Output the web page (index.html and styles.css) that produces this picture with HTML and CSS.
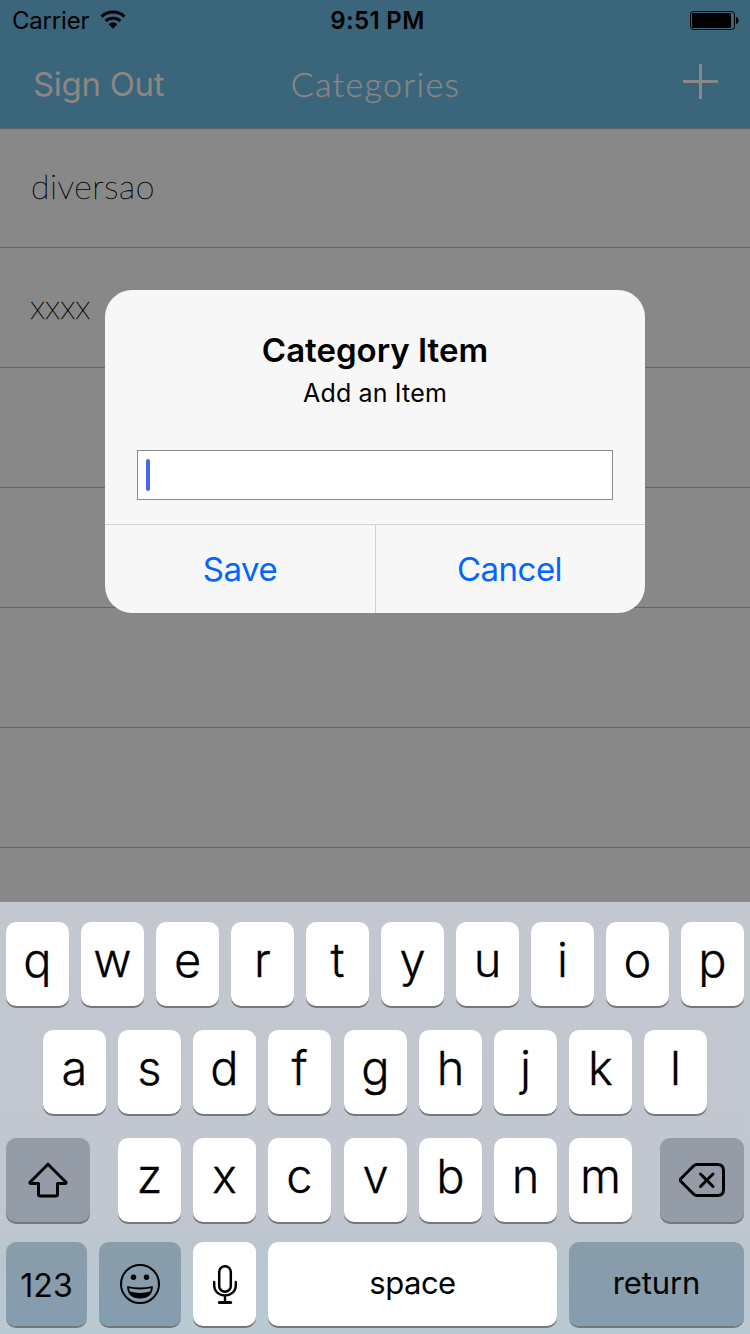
FILE: index.html
```
<!DOCTYPE html>
<html lang="en">
<head>
<meta charset="utf-8">
<title>Categories</title>
<link rel="stylesheet" href="styles.css">
</head>
<body>
<div class="screen">
  <header class="header">
    <div class="status">
      <div class="status-left">
        <span class="carrier">Carrier</span>
        <svg class="wifi" width="26" height="20" viewBox="0 0 26 20">
          <path d="M1.600 6.600C8 .6 18 .6 24.400 6.600" fill="none" stroke="#000" stroke-width="3"/>
          <path d="M5.600 11C9.800 7.100 16.200 7.100 20.400 11" fill="none" stroke="#000" stroke-width="2.800"/>
          <path d="M8.600 14.200C11 11.900 15 11.900 17.400 14.200L13 18.800Z"/>
        </svg>
      </div>
      <span class="time">9:51 PM</span>
      <svg class="battery" width="49" height="19" viewBox="0 0 49 19">
        <rect x=".5" y=".5" width="44" height="18" rx="3" fill="none" stroke="#000"/>
        <rect x="2" y="2" width="39" height="15" rx="1.500"/>
        <path d="M46 6c3.400.8 3.400 6.200 0 7z"/>
      </svg>
    </div>
    <nav class="nav">
      <span class="sign-out">Sign Out</span>
      <span class="nav-title">Categories</span>
      <svg class="plus" width="36" height="36" viewBox="0 0 36 36"><path d="M0 17.500H35M17.500 0V35" stroke="#8c8684" stroke-width="3"/></svg>
    </nav>
  </header>
  <ul class="list">
    <li class="row first"><span>diversao</span></li>
    <li class="row second"><span>xxxx</span></li>
    <li class="row"></li>
    <li class="row"></li>
    <li class="row"></li>
    <li class="row"></li>
  </ul>

  <div class="alert">
    <div class="alert-body">
      <div class="alert-title">Category Item</div>
      <div class="alert-message">Add an Item</div>
      <div class="field"><span class="caret"></span></div>
    </div>
    <div class="actions">
      <div class="action save"><span>Save</span></div>
      <div class="action cancel"><span>Cancel</span></div>
    </div>
  </div>

  <div class="keyboard">
    <div class="keys">
      <div class="key">q</div><div class="key">w</div><div class="key">e</div><div class="key">r</div><div class="key">t</div><div class="key">y</div><div class="key">u</div><div class="key">i</div><div class="key">o</div><div class="key">p</div>
    </div>
    <div class="keys middle">
      <div class="key">a</div><div class="key">s</div><div class="key">d</div><div class="key">f</div><div class="key nudge">g</div><div class="key">h</div><div class="key">j</div><div class="key">k</div><div class="key">l</div>
    </div>
    <div class="keys">
      <div class="key dark shift">
        <svg width="40" height="36" viewBox="0 0 40 36" fill="none" stroke="#000" stroke-width="3" stroke-linejoin="round"><path d="M20 2.200L38 20.200Q38.500 21.500 37 21.500H29.500V32Q29.500 34 27.500 34H12.500Q10.500 34 10.500 32V21.500H3Q1.500 21.500 2 20.200Z"/></svg>
      </div>
      <div class="key">z</div><div class="key">x</div><div class="key">c</div><div class="key nudge">v</div><div class="key">b</div><div class="key">n</div><div class="key">m</div>
      <div class="key dark delete">
        <svg width="46" height="34" viewBox="0 0 46 34" fill="none" stroke="#000" stroke-width="3" stroke-linejoin="round" stroke-linecap="round"><path d="M18 1.500H38.500Q44.500 1.500 44.500 7.500V26.500Q44.500 32.500 38.500 32.500H18Q16 32.500 14.500 31L2 18.500Q.8 17 2 15.500L14.500 3Q16 1.500 18 1.500Z"/><path d="M21.500 11L34 23.500M34 11L21.500 23.500"/></svg>
      </div>
    </div>
    <div class="keys bottom">
      <div class="key blue numbers">123</div>
      <div class="key blue emoji">
        <svg width="40" height="40" viewBox="0 0 40 40"><circle cx="20" cy="20" r="19" fill="none" stroke="#000" stroke-width="2"/><circle cx="13.500" cy="13.300" r="2.700"/><circle cx="26.500" cy="13.300" r="2.700"/><path d="M8 23Q20 26 32 23Q31.500 33.500 20 33.500T8 23Z" fill="none" stroke="#000" stroke-width="1.800" stroke-linejoin="round"/><path d="M9 27.300Q20 30.500 31 27.300Q28.500 33.500 20 33.500T9 27.300Z"/></svg>
      </div>
      <div class="key mic">
        <svg width="24" height="39" viewBox="0 0 24 39" fill="none" stroke="#000" stroke-linecap="round"><rect x="6.200" y="1.200" width="11.600" height="25.500" rx="5.800" stroke-width="2.500"/><path d="M1.200 17V20C1.200 34 22.800 34 22.800 20V17" stroke-width="2.400"/><path d="M12 31V37" stroke-width="2.400"/><path d="M6.300 37.500H17.700" stroke-width="3"/></svg>
      </div>
      <div class="key space">space</div>
      <div class="key blue return">return</div>
    </div>
  </div>
</div>
</body>
</html>
```

FILE: styles.css
```
* { box-sizing: border-box; }
body { margin: 0; font-family: Inter, "Liberation Sans", sans-serif; color: #000; }
.screen { position: relative; width: 750px; height: 1334px; overflow: hidden; background: #888; }
.header { height: 129px; background: #3a657a; border-bottom: 1px solid #666364; }
.status { display: grid; grid-template-columns: 1fr auto 1fr; align-items: center; height: 40px; padding: 0 11px 0 12px; }
.status-left { display: flex; align-items: center; gap: 11px; }
.carrier { font-size: 24px; letter-spacing: -0.2px; line-height: 38px; padding-top: 2px; }
.time { font-size: 24px; font-weight: 600; line-height: 38px; letter-spacing: 0.35px; padding: 2px 0 0 4px; }
.battery { justify-self: end; margin-top: 1px; }
.nav { display: grid; grid-template-columns: 1fr auto 1fr; align-items: center; height: 88px; padding: 0 31px 0 33px; color: #8c8684; }
.sign-out { font-size: 33px; letter-spacing: -0.3px; }
.nav-title { font-family: Lato, sans-serif; font-weight: 300; font-size: 34px; letter-spacing: 1.3px; margin: -1px 0 0 -1px; -webkit-text-stroke: 0.3px #8c8684; }
.plus { justify-self: end; margin-top: -5px; }
.list { list-style: none; margin: 0; padding: 0; }
.row { height: 120px; border-bottom: 1px solid #666468; padding: 0 0 4px 31px; display: flex; align-items: center; font-family: Lato, sans-serif; font-weight: 100; font-size: 34px; letter-spacing: 0.5px; -webkit-text-stroke: 0.4px #000; }
.first { height: 119px; padding-bottom: 6px; }
.second { letter-spacing: 0; padding-left: 30px; }

.alert { position: absolute; left: 105px; top: 290px; width: 540px; height: 323px; border-radius: 27px; background: #f7f7f7; overflow: hidden; display: flex; flex-direction: column; text-align: center; }
.alert-body { height: 234px; padding: 38px 32px 0; }
.alert-title { font-size: 33px; font-weight: 600; line-height: 44px; }
.alert-message { font-size: 25px; line-height: 32px; letter-spacing: 0.15px; margin-top: 5px; }
.field { height: 50px; margin-top: 41px; border: 1px solid #8a8a8a; background: #fff; padding: 8px; }
.caret { display: block; width: 4px; height: 32px; border-radius: 2px; background: #4668ef; }
.actions { flex: 1; display: flex; border-top: 1px solid #d0d0d3; }
.action { flex: 1; line-height: 88px; font-size: 33px; letter-spacing: -0.5px; color: #0464ff; }
.save { flex: 0 0 271px; border-right: 1px solid #d0d0d3; }
.cancel { padding-right: 2px; }

.keyboard { position: absolute; left: 0; top: 902px; width: 750px; height: 432px; padding: 20px 6px 0; display: flex; flex-direction: column; gap: 24px; background: linear-gradient(#c2c7d0 0, #c2c6cf 310px, #bac6cf 345px, #b8cad3 432px); }
.keys { display: flex; gap: 12px; height: 84px; }
.middle { padding-left: 37px; }
.bottom { margin-top: -4px; }
.key { flex: 0 0 63px; height: 84px; border-radius: 10px; background: #fff; box-shadow: 0 2px 0 #75777b; display: flex; align-items: center; justify-content: center; font-size: 47px; font-weight: 350; line-height: 76px; padding-bottom: 8px; -webkit-text-stroke: 0.3px #000; }
.nudge { margin-left: 1px; }
.dark { flex-basis: 84px; background: #949ca7; padding: 0; }
.shift { margin-right: 16px; }
.delete { margin-left: 16px; }
.blue { background: linear-gradient(#8a9ca9, #849db0); padding: 0; }
.numbers, .space, .return { font-weight: 400; -webkit-text-stroke: 0; }
.numbers { flex-basis: 81px; font-size: 32px; padding-top: 3px; }
.emoji { flex-basis: 82px; }
.mic { padding: 0; }
.space { flex-basis: 289px; font-size: 31px; letter-spacing: -0.5px; padding-bottom: 2px; }
.return { flex-basis: 175px; font-size: 31px; letter-spacing: -0.1px; padding-bottom: 2px; }
```
